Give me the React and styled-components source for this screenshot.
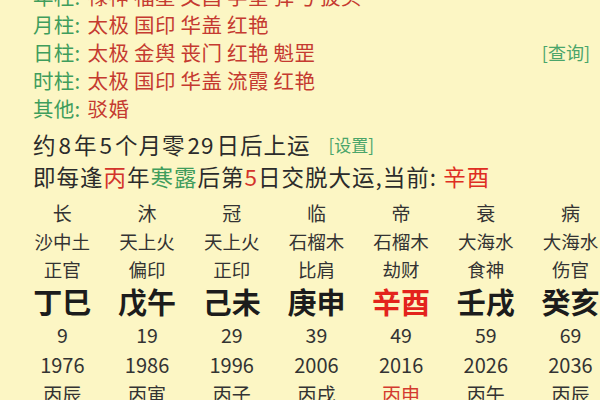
import React from 'react';
import styled, { createGlobalStyle } from 'styled-components';

const GlobalStyle = createGlobalStyle`
  html, body {
    margin: 0;
    padding: 0;
    background: #fcf6c4;
    overflow: hidden;
  }
  body {
    font-family: "Noto Sans CJK SC", "Noto Sans", sans-serif;
    color: #2b2b2b;
  }
`;

const Page = styled.div`
  width: 600px;
  height: 400px;
  overflow: hidden;
  background: #fcf6c4;
`;

const ShenSha = styled.div`
  margin-top: -18px;
  padding: 0 10px 0 33px;
  display: flex;
  flex-direction: column;
`;

const ShaRow = styled.div`
  display: flex;
  align-items: center;
  height: 28px;
  font-size: 20.5px;
  letter-spacing: 0.3px;
  white-space: nowrap;
`;

const Label = styled.span`
  color: #3f9d5c;
  margin-right: 7px;
`;

const Stars = styled.span`
  color: #c53a30;
  flex: 1;
`;

const Link = styled.span`
  color: #4aa56a;
  font-size: ${(p) => p.size || 17}px;
  letter-spacing: 0;
  margin-left: ${(p) => p.gap || 0}px;
`;

const Luck = styled.div`
  padding: 6px 0 0 33px;
  display: flex;
  flex-direction: column;
`;

const LuckLine = styled.div`
  display: flex;
  align-items: center;
  height: 32px;
  font-size: 22.5px;
  letter-spacing: 1px;
  white-space: nowrap;
`;

const Num = styled.span`
  padding: 0 2px;
  color: ${(p) => p.c || 'inherit'};
`;

const Hi = styled.span`
  color: ${(p) => p.c};
`;

const Table = styled.div`
  padding: 6px 0 0 20px;
  display: grid;
  grid-template-columns: repeat(7, 84.7px);
`;

const Cell = styled.div`
  display: flex;
  align-items: center;
  justify-content: center;
  white-space: nowrap;
  height: ${(p) => p.h || 28}px;
  font-size: ${(p) => p.fs || 18}px;
  font-weight: ${(p) => (p.bold ? 700 : 400)};
  color: ${(p) => (p.red ? (p.bold ? '#e3231c' : '#d33a2e') : p.bold ? '#1c1c1c' : '#333')};
`;

const shaRows = [
  ['年柱', '禄神 福星 文昌 学堂 弹弓 披头'],
  ['月柱', '太极 国印 华盖 红艳'],
  ['日柱', '太极 金舆 丧门 红艳 魁罡', true],
  ['时柱', '太极 国印 华盖 流霞 红艳'],
  ['其他', '驳婚'],
];

const columns = [
  ['长', '沙中土', '正官', '丁巳', '9', '1976', '丙辰'],
  ['沐', '天上火', '偏印', '戊午', '19', '1986', '丙寅'],
  ['冠', '天上火', '正印', '己未', '29', '1996', '丙子'],
  ['临', '石榴木', '比肩', '庚申', '39', '2006', '丙戌'],
  ['帝', '石榴木', '劫财', '辛酉', '49', '2016', '丙申', true],
  ['衰', '大海水', '食神', '壬戌', '59', '2026', '丙午'],
  ['病', '大海水', '伤官', '癸亥', '69', '2036', '丙辰'],
];

const rowSpecs = [
  { h: 29, fs: 19 },
  { h: 28, fs: 18.5 },
  { h: 28, fs: 18.5 },
  { h: 36, fs: 29, bold: true },
  { h: 31, fs: 19.5 },
  { h: 29, fs: 20 },
  { h: 29, fs: 19 },
];

const App = () => (
  <Page>
    <GlobalStyle />
    <ShenSha>
      {shaRows.map(([label, stars, query]) => (
        <ShaRow key={label}>
          <Label>{label}:</Label>
          <Stars>{stars}</Stars>
          {query && <Link size={18}>[查询]</Link>}
        </ShaRow>
      ))}
    </ShenSha>
    <Luck>
      <LuckLine>
        约<Num>8</Num>年<Num>5</Num>个月零<Num>29</Num>日后上运
        <Link gap={18}>[设置]</Link>
      </LuckLine>
      <LuckLine>
        即每逢
        <Hi c="#d3342b">丙</Hi>
        年
        <Hi c="#3f9d5c">寒露</Hi>
        后第
        <Hi c="#d3342b">5</Hi>
        日交脱大运,当前:&nbsp;
        <Hi c="#df2d22">辛酉</Hi>
      </LuckLine>
    </Luck>
    <Table>
      {rowSpecs.map((spec, r) =>
        columns.map((col, c) => (
          <Cell
            key={`${r}-${c}`}
            h={spec.h}
            fs={spec.fs}
            bold={spec.bold}
            red={col[7] && (r === 3 || r === 6)}
          >
            {col[r]}
          </Cell>
        )),
      )}
    </Table>
  </Page>
);

export default App;
